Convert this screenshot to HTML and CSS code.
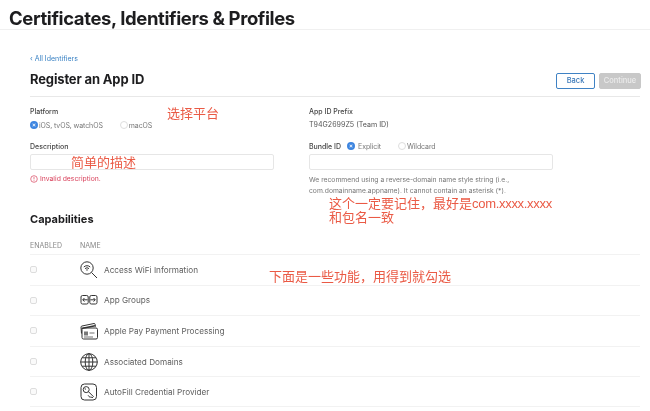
FILE: index.html
```html
<!DOCTYPE html>
<html lang="zh-CN">
<head>
<meta charset="utf-8">
<title>Register an App ID</title>
<link rel="stylesheet" href="styles.css">
</head>
<body>
<div class="page">
  <header class="top"><h1>Certificates, Identifiers &amp; Profiles</h1></header>
  <main class="main">
    <a class="back-link">‹ All Identifiers</a>
    <div class="head-row">
      <h2>Register an App ID</h2>
      <div class="buttons">
        <button class="btn btn-back">Back</button>
        <button class="btn btn-cont">Continue</button>
      </div>
    </div>
    <div class="form">
      <div class="col">
        <div class="label">Platform</div>
        <div class="radios">
          <span class="radio on"></span><span class="radio-text first">iOS, tvOS, watchOS</span>
          <span class="radio"></span><span class="radio-text">macOS</span>
        </div>
        <div class="label label-desc">Description</div>
        <div class="input"></div>
        <div class="error">
          <svg class="err-icon" viewBox="0 0 8 8"><circle cx="4" cy="4" r="3.3"/><path d="M4 2v2.4M4 5.3v.8"/></svg>
          <span>Invalid description.</span>
        </div>
      </div>
      <div class="col">
        <div class="label">App ID Prefix</div>
        <div class="prefix">T94G2699Z5 (Team ID)</div>
        <div class="bundle-row">
          <span class="label">Bundle ID</span>
          <span class="radio on"></span><span class="radio-text exp">Explicit</span>
          <span class="radio"></span><span class="radio-text">Wildcard</span>
        </div>
        <div class="input"></div>
        <p class="help">We recommend using a reverse-domain name style string (i.e., com.domainname.appname). It cannot contain an asterisk (*).</p>
      </div>
    </div>
    <h3>Capabilities</h3>
    <div class="cap-head"><span class="c1">ENABLED</span><span>NAME</span></div>
    <div class="row">
      <span class="check"></span>
      <svg class="icon" viewBox="0 0 18 18"><circle cx="7" cy="7" r="6.2"/><path d="M11.5 11.5 17 17"/><path d="M3.8 6a4.6 4.6 0 0 1 6.4 0M5 7.6a3 3 0 0 1 4 0M6.2 9.1a1.2 1.2 0 0 1 1.6 0"/></svg>
      <span class="name">Access WiFi Information</span>
    </div>
    <div class="row">
      <span class="check"></span>
      <svg class="icon" viewBox="0 0 18 18"><rect x="1" y="4.5" width="7.2" height="8.5" rx="1.5"/><rect x="9.8" y="4.5" width="7.2" height="8.5" rx="1.5"/><path d="M2.8 8.8H7.6M4.4 7 2.8 8.8l1.6 1.8M15.2 8.8H10.4M13.6 7l1.6 1.8-1.6 1.8"/></svg>
      <span class="name">App Groups</span>
    </div>
    <div class="row">
      <span class="check"></span>
      <svg class="icon" viewBox="0 0 18 18"><path d="M1.5 11.5 1 5.2c0-.7.3-1 1-1.2L14 1.5c.6-.1 1 .2 1.1.8l.4 2.4"/><path d="M1.5 6.5 15 3.8" stroke-width="1.6"/><rect x="2" y="6" width="15.5" height="11" rx="1.5"/><rect class="fill" x="4" y="9.5" width="4" height="4"/><path d="M9.5 11h5M4 15h9" stroke-width=".7"/></svg>
      <span class="name">Apple Pay Payment Processing</span>
    </div>
    <div class="row">
      <span class="check"></span>
      <svg class="icon" viewBox="0 0 18 18"><circle cx="9" cy="9" r="8.3"/><ellipse cx="9" cy="9" rx="3.8" ry="8.3"/><path d="M9 .7v16.6M.7 9h16.6M2 4.8h14M2 13.2h14"/></svg>
      <span class="name">Associated Domains</span>
    </div>
    <div class="row">
      <span class="check"></span>
      <svg class="icon" viewBox="0 0 18 18"><rect x="1" y="1" width="15.5" height="16" rx="3.5"/><circle cx="6.2" cy="6.6" r="3"/><path d="M8.4 8.6l5 5-1.3 1.3-1.2-1.2-.8.8-2-2.2M4.6 5.8l1.4.4"/></svg>
      <span class="name">AutoFill Credential Provider</span>
    </div>
  </main>
  <span class="note n1">选择平台</span>
  <span class="note n2">简单的描述</span>
  <span class="note n3">这个一定要记住，最好是<span class="latin">com.xxxx.xxxx</span><br>和包名一致</span>
  <span class="note n4">下面是一些功能，用得到就勾选</span>
</div>
</body>
</html>
```
FILE: styles.css
```css
* { box-sizing: border-box; }
html, body { margin: 0; height: 100%; background: #fff; overflow: hidden; }
.page {
  position: relative;
  width: 650px;
  height: 411px;
  overflow: hidden;
  font-family: Inter, "Liberation Sans", sans-serif;
  color: #333;
  filter: blur(0.35px);
}
.top { height: 30px; padding: 7px 0 0 9px; border-bottom: 1px solid #f0f0f0; }
h1 { margin: 0; font-size: 18.5px; line-height: 22px; font-weight: 700; letter-spacing: -.39px; color: #1d1d1f; white-space: nowrap; }
.main { padding: 0 10px 0 30px; }
.back-link { display: block; margin-top: 24px; font-size: 7px; line-height: 9px; color: #3a82c4; }
.head-row { display: flex; justify-content: space-between; align-items: flex-start; height: 28px; margin-top: 6px; padding-top: 2px; border-bottom: 1px solid #e8e8e8; }
h2 { margin: 0; font-size: 13px; line-height: 16px; font-weight: 700; letter-spacing: -.15px; color: #1d1d1f; }
.buttons { display: flex; gap: 4px; margin: 2px -1px 0 0; }
.btn { height: 16px; padding: 0; border-radius: 2px; font: 500 7.5px/14px Inter, sans-serif; }
.btn-back { width: 39px; background: #fff; border: 1px solid #3f82c4; color: #3a78b8; }
.btn-cont { width: 42px; background: #c8c8c8; border: 1px solid #c8c8c8; color: #ececec; }
.form { display: flex; gap: 35px; padding-top: 10px; }
.col { width: 244px; }
.label { font-size: 7px; line-height: 9px; font-weight: 500; color: #444; }
.radios { display: flex; align-items: center; height: 10px; margin-top: 4px; }
.radio { width: 8px; height: 8px; border-radius: 50%; border: 1px solid #ddd; background: #fff; flex: none; }
.radio.on { border: 2px solid #3d85e0; background: #fff; box-shadow: inset 0 0 0 1px #3d85e0; }
.radio-text { margin-left: 1px; font-size: 7px; line-height: 9px; letter-spacing: -.1px; color: #777; }
.radio-text.first { margin-right: 17px; }
.radio-text.exp { margin-right: 17px; margin-left: 3px; }
.label-desc { margin-top: 12px; }
.input { height: 16px; margin-top: 3px; border: 1px solid #e6e6e6; border-radius: 2px; background: #fff; }
.error { display: flex; align-items: center; gap: 2px; margin-top: 4px; font-size: 6.8px; line-height: 9px; color: #d9425c; }
.err-icon { width: 8px; height: 8px; fill: none; stroke: #d9425c; stroke-width: .7; }
.prefix { margin-top: 4px; font-size: 7.1px; line-height: 9px; color: #555; }
.bundle-row { display: flex; align-items: center; height: 10px; margin-top: 12px; }
.bundle-row .label { margin-right: 6px; }
.help { margin: 4px 0 0; width: 240px; font-size: 6.75px; line-height: 11px; color: #777; }
h3 { margin: 16px 0 0; font-size: 11px; line-height: 14px; font-weight: 700; color: #1d1d1f; }
.cap-head { display: flex; height: 28px; padding-top: 16px; font-size: 7px; line-height: 8px; color: #888; }
.cap-head .c1 { width: 50px; }
.row { display: flex; align-items: center; height: 30.6px; border-top: 1px solid #f2f2f2; }
.row:last-child { border-bottom: 1px solid #f2f2f2; }
.check { width: 7px; height: 7px; border: 1px solid #ddd; border-radius: 2px; background: #fafafa; margin-right: 43px; flex: none; }
.icon { width: 18px; height: 18px; fill: none; stroke: #333; stroke-width: 1; flex: none; }
.icon .fill { fill: #777; stroke: none; }
.name { margin-left: 6px; font-size: 8.2px; color: #5e5e5e; white-space: nowrap; }
.note { position: absolute; font-family: "Liberation Sans", "Noto Sans CJK SC", sans-serif; font-size: 13px; line-height: 14px; color: #ea5a45; white-space: nowrap; }
.latin { letter-spacing: -.3px; }
.n1 { left: 167px; top: 107px; }
.n2 { left: 71px; top: 156px; }
.n3 { left: 329px; top: 197px; }
.n4 { left: 269px; top: 270px; }
```
